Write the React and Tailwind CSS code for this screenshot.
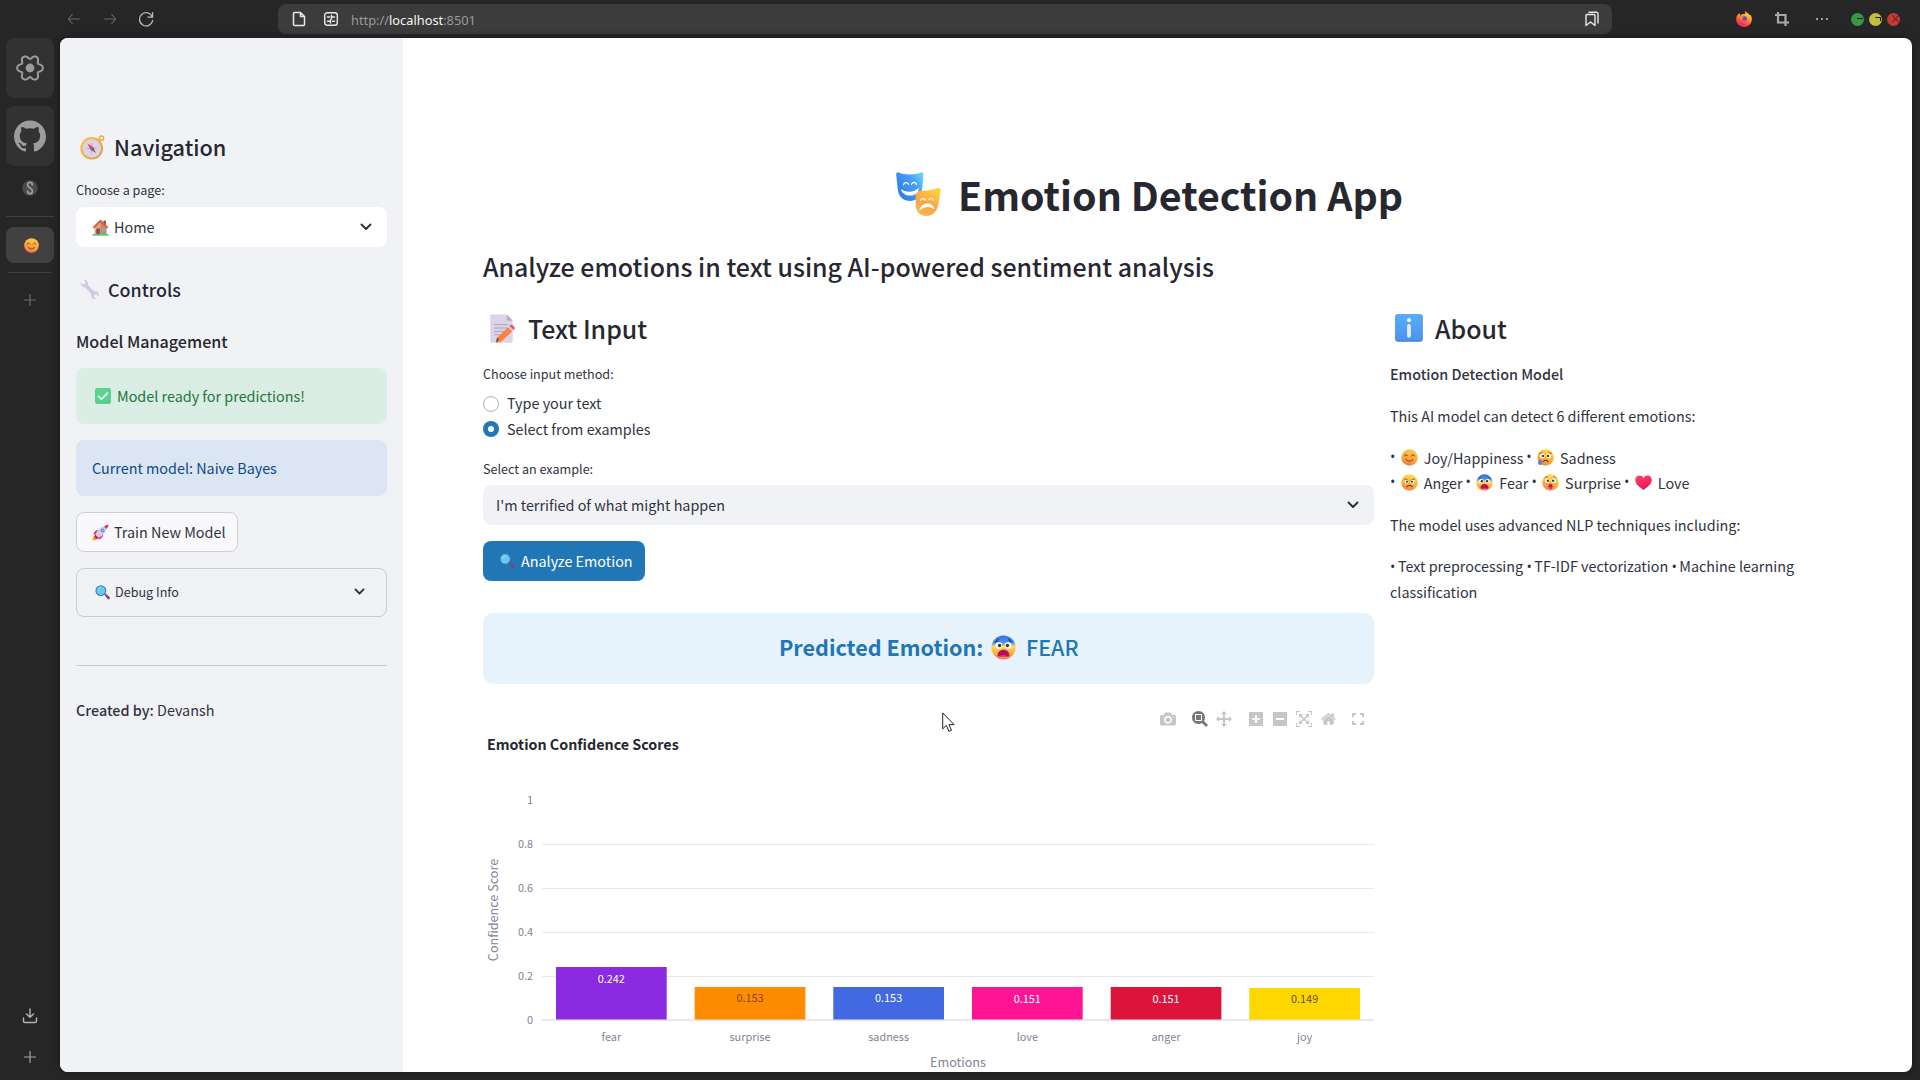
import React from "react";
import { SiGithub } from "react-icons/si";

/* ---------- Emoji drawings ---------- */

function Svg({ label, className, children }) {
  return (
    <svg role="img" aria-label={label} viewBox="0 0 32 32" className={"shrink-0 " + className}>
      {children}
    </svg>
  );
}

function Face({ id, label, className, top = "#ffd84a", mid = "#ffb52e", low = "#f5785a", children }) {
  return (
    <Svg label={label} className={className}>
      <defs>
        <linearGradient id={id} x1="0.65" y1="0" x2="0.35" y2="1">
          <stop offset="0" stopColor={top} />
          <stop offset="0.5" stopColor={mid} />
          <stop offset="1" stopColor={low} />
        </linearGradient>
      </defs>
      <circle cx="16" cy="16" r="15.5" fill={`url(#${id})`} />
      {children}
    </Svg>
  );
}

function Eyes({ y = 13 }) {
  return (
    <g>
      <circle cx="10" cy={y} r="4.3" fill="#fff" />
      <circle cx="22" cy={y} r="4.3" fill="#fff" />
      <circle cx="11" cy={y} r="2.2" fill="#4a2b33" />
      <circle cx="21" cy={y} r="2.2" fill="#4a2b33" />
    </g>
  );
}

function Smile({ className, id = "smile", low = "#f0803c" }) {
  return (
    <Face id={id} label="smile" className={className} top="#ffc850" mid="#ffac3c" low={low}>
      <g fill="none" stroke="#6b3528" strokeWidth="1.7" strokeLinecap="round">
        <path d="M6.5 13c.8-3 5-3 6 0M19.5 13c.8-3 5-3 6 0" />
        <path d="M9 19.5c3 4.6 11 4.600 14 0" />
      </g>
    </Face>
  );
}

function Sad({ className }) {
  return (
    <Face id="sad" label="sad" className={className} low="#f28a3e">
      <Eyes y={13} />
      <path d="M5 8.5c2-.2 3.7-1.2 4.8-3M27 8.5c-2-.2-3.7-1.2-4.8-3" stroke="#7a4428" strokeWidth="1.6" fill="none" strokeLinecap="round" />
      <path d="M12 23.500c2-3 6.500-3 8.500 0" stroke="#5a2b2b" strokeWidth="2" fill="none" strokeLinecap="round" />
      <path d="M6 19c2.300 3.200 3.800 5 3.800 7.400a3.900 3.900 0 0 1-7.800 0C2 24 3.900 22 6 19z" fill="#4f7fe8" />
    </Face>
  );
}

function Angry({ className }) {
  return (
    <Face id="angry" label="angry" className={className} top="#ffdf5a" low="#f2824a">
      <circle cx="10.5" cy="14.500" r="3.800" fill="#fff" />
      <circle cx="21.5" cy="14.500" r="3.800" fill="#fff" />
      <circle cx="11.2" cy="14.700" r="1.900" fill="#4a2b33" />
      <circle cx="20.8" cy="14.700" r="1.900" fill="#4a2b33" />
      <path d="M6.500 9.500c2.500 0 5 1 7 2.800M25.500 9.500c-2.500 0-5 1-7 2.800" stroke="#7a4428" strokeWidth="1.500" fill="none" strokeLinecap="round" />
      <path d="M11 24c2.500-3.200 7.500-3.200 10 0" stroke="#5a2b2b" strokeWidth="1.900" fill="none" strokeLinecap="round" />
    </Face>
  );
}

function Fear({ className, id = "fear" }) {
  return (
    <Svg label="fear" className={className}>
      <defs>
        <linearGradient id={id} x1="0.5" y1="0" x2="0.5" y2="1">
          <stop offset="0" stopColor="#2f6fe0" />
          <stop offset="0.28" stopColor="#4a90f0" />
          <stop offset="0.46" stopColor="#ffd560" />
          <stop offset="0.7" stopColor="#ffb43a" />
          <stop offset="1" stopColor="#f07a5a" />
        </linearGradient>
      </defs>
      <circle cx="16" cy="16" r="15.500" fill={`url(#${id})`} />
      <path d="M5 9c2-.4 3.400-1.600 4.300-3.400M27 9c-2-.4-3.400-1.600-4.300-3.400" stroke="#1f3f80" strokeWidth="1.500" fill="none" strokeLinecap="round" />
      <Eyes y={13.500} />
      <path d="M16 19c4.200 0 7.500 3.200 7.500 7 0 1-.7 1.600-1.600 1.600H10.100c-.9 0-1.600-.6-1.600-1.600 0-3.800 3.300-7 7.500-7z" fill="#b80f56" />
      <path d="M11 27.600c1-2.600 9-2.600 10 0z" fill="#ec2f7b" />
    </Svg>
  );
}

function Surprise({ className }) {
  return (
    <Face id="surprise" label="surprise" className={className} top="#ffdf5a" low="#f5806a">
      <Eyes y={12.500} />
      <path d="M5.500 7.500c1.200-1.800 3-2.500 5-2M26.500 7.500c-1.200-1.800-3-2.500-5-2" stroke="#8a5230" strokeWidth="1.500" fill="none" strokeLinecap="round" />
      <ellipse cx="16" cy="23.500" rx="3.900" ry="4.500" fill="#b3124e" />
      <ellipse cx="16" cy="25.800" rx="2.800" ry="2.200" fill="#f0387c" />
    </Face>
  );
}

function Heart({ className }) {
  return (
    <Svg label="love" className={className}>
      <defs>
        <linearGradient id="heart" x1="0.2" y1="0" x2="0.6" y2="1">
          <stop offset="0" stopColor="#f8436a" />
          <stop offset="0.55" stopColor="#f5265c" />
          <stop offset="1" stopColor="#d8127a" />
        </linearGradient>
      </defs>
      <path d="M16 30C6 23.500.5 18 .5 11 .5 6.300 4 3 8.500 3c3 0 5.900 1.600 7.500 4.400C17.600 4.600 20.500 3 23.500 3 28 3 31.500 6.300 31.500 11 31.500 18 26 23.500 16 30z" fill="url(#heart)" />
    </Svg>
  );
}

function Compass({ className }) {
  return (
    <Svg label="compass" className={className}>
      <defs>
        <linearGradient id="compass" x1="0" y1="0" x2="1" y2="1">
          <stop offset="0" stopColor="#ffc34d" />
          <stop offset="1" stopColor="#e09a2c" />
        </linearGradient>
      </defs>
      <circle cx="27.500" cy="4" r="2.800" fill="none" stroke="#f0ac36" strokeWidth="1.800" />
      <circle cx="15" cy="17" r="14.500" fill="url(#compass)" />
      <circle cx="15" cy="17" r="12" fill="#dcd3e2" />
      <path d="M15 9l1.200 6.800 6.800 1.200-6.800 1.200L15 25l-1.200-6.800L7 17l6.800-1.200z" fill="#b0a6bb" />
      <path d="M9.500 11l7 4.300-3 3.200z" fill="#ee2f78" />
      <path d="M20.500 23l-7-4.500 3-3.200z" fill="#6b6272" />
    </Svg>
  );
}

function House({ className }) {
  return (
    <Svg label="house" className={className}>
      <rect x="21.500" y="3" width="4.500" height="9" fill="#8f4a45" />
      <path d="M5 14L16 4l11 10v15H5z" fill="#dfa77c" />
      <path d="M16 4l11 10v15H16z" fill="#c98566" />
      <path d="M16 1L1 15.500l2.400 2.300L16 6l12.600 11.800 2.400-2.300z" fill="#dc5b3c" />
      <rect x="8" y="18" width="7" height="11" fill="#8a5148" />
      <rect x="18.500" y="17.500" width="6" height="6" fill="#6cb6e6" />
      <rect x="1" y="28" width="30" height="3.500" rx="1" fill="#4fd08a" />
    </Svg>
  );
}

function Wrench({ className }) {
  return (
    <Svg label="wrench" className={className}>
      <path
        d="M9.500 1.500c2.800 1.600 4 4.700 3.200 7.500l9.500 10.500c3-.6 6.200.8 7.600 3.700.8 1.700.8 3.500.2 5l-3.800-4-3.300.8-.9 3.200 3.600 4c-3 .6-6.300-1-7.500-4-.6-1.500-.6-3-.2-4.400L8.400 13C5.500 13.500 2.600 12 1.500 9.200 1 8 1 6.500 1.200 5.200l3.500 3.600 3.200-.9.900-3.200-2.800-3.200c1.200-.5 2.400-.5 3.500 0z"
        fill="#d3c7e3"
      />
    </Svg>
  );
}

function Check({ className }) {
  return (
    <Svg label="check" className={className}>
      <rect x="0.500" y="0.500" width="31" height="31" rx="3.500" fill="#3fbf78" />
      <rect x="0.500" y="0.500" width="29" height="29" rx="3.500" fill="#57d58e" />
      <path d="M7 16.500l6 6L25 10" fill="none" stroke="#fff" strokeWidth="3.200" strokeLinecap="round" strokeLinejoin="round" />
    </Svg>
  );
}

function Rocket({ className }) {
  return (
    <Svg label="rocket" className={className}>
      <path d="M1 31c0-5 1.500-8 5-9l5 5c-1.500 3-5 4-10 4z" fill="#f9a03c" />
      <path d="M3 18c2-5 6-7.500 11-7l-7 12zM14 29c5-2 7.500-6 7-11L9 25z" fill="#e0306f" />
      <path d="M6 21C9 12 16 4.500 27 3.500 28.500 15 20 23 11 26.500z" fill="#d9cbe8" />
      <path d="M22.500 4.600C25 3 28.500 1 31 1c0 2.500-1.800 6-3.300 8.500z" fill="#e02f58" />
      <circle cx="20" cy="12" r="3.600" fill="#4d8be0" />
      <circle cx="20" cy="12" r="2" fill="#8ab9f2" />
      <path d="M6 20l7 6.500-5 1.500-4-4z" fill="#c91f5c" />
    </Svg>
  );
}

function Magnifier({ className }) {
  return (
    <Svg label="search" className={className}>
      <path d="M20 20.500l2.500-2.500 8 7c1.600 1.500 1.600 3.400.4 4.600s-3.200 1.100-4.600-.4z" fill="#83407d" />
      <circle cx="12.500" cy="12" r="11.500" fill="#4675ad" />
      <circle cx="12.500" cy="12" r="9.300" fill="#62cbf0" />
      <path d="M7 11c0-3 2-5 5-5.200" fill="none" stroke="#9be4fa" strokeWidth="1.600" strokeLinecap="round" />
    </Svg>
  );
}

function Memo({ className }) {
  return (
    <svg role="img" aria-label="memo" viewBox="0 0 27 30" className={"shrink-0 " + className}>
      <path d="M1.500.5h16l6 6.500v21.500a1.300 1.300 0 0 1-1.300 1.300H1.500A1.300 1.300 0 0 1 .3 28.500V1.800A1.300 1.300 0 0 1 1.500.5z" fill="#dcd4e6" />
      <path d="M17.500.5l6 6.500h-4.700a1.300 1.300 0 0 1-1.300-1.300z" fill="#b5abc4" />
      <path d="M4.500 11h14M4.500 14.500h14M4.500 18h12M4.500 21.500h8" stroke="#a9a0b5" strokeWidth="1" />
      <path d="M6.300 29.700l1-5.200L18.800 13.600l4.300 4.400L11.600 28.800z" fill="#fb8240" />
      <path d="M6.300 29.700l1-5.200 2 1.600z" fill="#5a3f4a" />
      <path d="M18.800 13.600l1.300-1.300 4.400 4.300L23.100 18z" fill="#d8cfe2" />
      <path d="M20.100 12.300l1-1c1.700-1.200 5.800 2.200 4.400 4.300l-1 1z" fill="#f5555e" />
    </svg>
  );
}

function InfoBox({ className }) {
  return (
    <Svg label="info" className={className}>
      <defs>
        <linearGradient id="info" x1="0" y1="0" x2="0" y2="1">
          <stop offset="0" stopColor="#58adfb" />
          <stop offset="1" stopColor="#4c93ee" />
        </linearGradient>
      </defs>
      <rect x="0.300" y="0.300" width="31.400" height="31.400" rx="3" fill="#3d7fd6" />
      <rect x="0.300" y="0.300" width="30.400" height="30" rx="3" fill="url(#info)" />
      <circle cx="16" cy="7" r="2.300" fill="#f0f4ff" />
      <rect x="13.800" y="11.500" width="4.400" height="15.500" rx="2.200" fill="#e6ecff" />
    </Svg>
  );
}

function Masks({ className }) {
  return (
    <svg role="img" aria-label="masks" viewBox="0 0 45 44" className={"shrink-0 " + className}>
      <defs>
        <linearGradient id="maskBlue" x1="0" y1="0.700" x2="1" y2="0">
          <stop offset="0" stopColor="#2d7be6" />
          <stop offset="0.600" stopColor="#4a9ff5" />
          <stop offset="1" stopColor="#72e0fb" />
        </linearGradient>
        <linearGradient id="maskGold" x1="0.800" y1="0" x2="0.300" y2="1">
          <stop offset="0" stopColor="#ffd43f" />
          <stop offset="0.600" stopColor="#f9a548" />
          <stop offset="1" stopColor="#f9b84a" />
        </linearGradient>
      </defs>
      <path d="M2.500.3C7 3.200 20.500 3.200 24.800.3c1.700-.5 2.800.6 2.700 2.400l-1.300 13.800C25.200 24.500 20 29 14 29 8 29 3 25.500 1.900 18L.2 3C0 1 1 0 2.500.3z" fill="url(#maskBlue)" />
      <path d="M19.500 18.500c6 .9 15 .3 21.500-2.200 2.500-.8 3.900 0 3.700 2.200L42.500 32c-1.600 8-6 12-12 12s-10-3.500-10.800-10z" fill="url(#maskGold)" />
      <path d="M5 17c4.500 3.800 13.500 3.800 17.500-1.200.8 4.300-3.300 7.800-8.300 7.800-4.800 0-8.700-2.600-9.200-6.600z" fill="#fff" />
      <path d="M7.500 12.800c.6-2.800 4.300-2.800 5.100-.4M15.500 12.400c.8-2.700 4.400-2.700 5 .2" fill="none" stroke="#fff" strokeWidth="1.200" strokeLinecap="round" />
      <path d="M23.300 39c.6-4.500 4-7.500 8-7.500 3.700 0 6.500 2 7 6-3.500-3.700-10.600-3.700-15 1.500z" fill="#fff" />
      <path d="M24.500 28.500c.8-2.400 4-2.600 5-.3M33 27.700c1-2.200 4-2 4.500.8" fill="none" stroke="#fff" strokeWidth="1.200" strokeLinecap="round" />
    </svg>
  );
}

function Firefox({ className }) {
  return (
    <Svg label="Firefox" className={className}>
      <defs>
        <linearGradient id="fox" x1="0.800" y1="0" x2="0.300" y2="1">
          <stop offset="0" stopColor="#fff04a" />
          <stop offset="0.400" stopColor="#ff9a2b" />
          <stop offset="0.750" stopColor="#ff3f45" />
          <stop offset="1" stopColor="#e81f7a" />
        </linearGradient>
      </defs>
      <path d="M18.500 0c-1 3 .3 4.800 1.500 6-6-1-9 1-10.500 3C7.500 7.500 7.400 5.500 7.500 4 2.500 6.800 0 12 .3 17.500 1 26 8 32 16.200 32 24.500 32 31.700 25.500 31.700 16.500c0-3.700-1-7.300-3.600-9.700 0 1.200.2 2 .2 2.700C26.500 5 21 4 18.500 0z" fill="url(#fox)" />
      <circle cx="16.500" cy="16" r="5.500" fill="#7b3fd0" />
      <path d="M8 12c3 0 6 .5 8 2-2 1-3.500 1.500-4 3.500 2 2.500 6 3 8.500.5C19 23.500 9.500 23.500 8 12z" fill="#ff7a33" />
    </Svg>
  );
}

/* ---------- Line icons ---------- */

function Line({ className, vb = "0 0 16 16", width = 1.2, children }) {
  return (
    <svg viewBox={vb} className={"shrink-0 " + className} fill="none" stroke="currentColor" strokeWidth={width} strokeLinecap="round" strokeLinejoin="round">
      {children}
    </svg>
  );
}

function Chevron({ className }) {
  return (
    <Line className={className} vb="0 0 12 8" width={2}>
      <path d="M1.500 1.500L6 6l4.500-4.500" />
    </Line>
  );
}

const gearPath =
  Array.from({ length: 120 }, (_, i) => {
    const a = (i / 120) * Math.PI * 2;
    const r = 11.2 + 1.9 * Math.cos(6 * a) - 0.25 * Math.cos(12 * a);
    return `${i ? "L" : "M"}${(16 + r * Math.cos(a)).toFixed(2)} ${(16 + r * Math.sin(a)).toFixed(2)}`;
  }).join("") + "Z";

function Gear() {
  return (
    <svg viewBox="0 0 32 32" className="size-8">
      <path d={gearPath} fill="none" stroke="#9c9c9c" strokeWidth="2" strokeLinejoin="round" />
      <circle cx="16" cy="16" r="4.400" fill="#9c9c9c" />
    </svg>
  );
}

function Bar({ path, w = 1000, className }) {
  return (
    <svg viewBox={`0 0 ${w} 1000`} className={"h-4 shrink-0 " + className} fill="currentColor">
      <path transform="matrix(1 0 0 -1 0 850)" d={path} />
    </svg>
  );
}

const icons = {
  camera:
    "m500 450c-83 0-150-67-150-150 0-83 67-150 150-150 83 0 150 67 150 150 0 83-67 150-150 150z m400 150h-120c-16 0-34 13-39 29l-31 93c-6 15-23 28-40 28h-340c-16 0-34-13-39-28l-31-94c-6-15-23-28-40-28h-120c-55 0-100-45-100-100v-450c0-55 45-100 100-100h800c55 0 100 45 100 100v450c0 55-45 100-100 100z m-400-550c-138 0-250 112-250 250 0 138 112 250 250 250 138 0 250-112 250-250 0-138-112-250-250-250z m365 380c-19 0-35 16-35 35 0 19 16 35 35 35 19 0 35-16 35-35 0-19-16-35-35-35z",
  zoom: "m1000-25l-250 251c40 63 63 138 63 218 0 224-182 406-407 406-224 0-406-182-406-406s183-406 407-406c80 0 155 22 218 62l250-250 125 125z m-812 250l0 438 437 0 0-438-437 0z m62 375l313 0 0-312-313 0 0 312z",
  pan: "m1000 350l-187 188 0-125-250 0 0 250 125 0-188 187-187-187 125 0 0-250-250 0 0 125-188-188 186-187 0 125 252 0 0-250-125 0 187-188 188 188-125 0 0 250 250 0 0-126 187 188z",
  zoomIn: "m1 787l0-875 875 0 0 875-875 0z m687-500l-187 0 0-187-125 0 0 187-188 0 0 125 188 0 0 187 125 0 0-187 187 0 0-125z",
  zoomOut: "m0 788l0-876 876 0 0 876-876 0z m688-500l-500 0 0 125 500 0 0-125z",
  autoscale:
    "m250 850l-187 0-63 0 0-62 0-188 63 0 0 188 187 0 0 62z m688 0l-188 0 0-62 188 0 0-188 62 0 0 188 0 62-62 0z m-875-938l0 188-63 0 0-188 0-62 63 0 187 0 0 62-187 0z m875 188l0-188-188 0 0-62 188 0 62 0 0 62 0 188-62 0z m-125 188l-1 0-93-94-156 156 156 156 92-93 2 0 0 250-250 0 0-2 93-92-156-156-156 156 94 92 0 2-250 0 0-250 0 0 93 93 157-156-157-156-93 94 0 0 0-250 250 0 0 0-94 93 156 157 156-157-93-93 0 0 250 0 0 250z",
  home: "m786 296v-267q0-15-11-26t-25-10h-214v214h-143v-214h-214q-15 0-25 10t-11 26v267q0 1 0 2t0 2l321 264 321-264q1-1 1-4z m124 39l-34-41q-5-5-12-6h-2q-7 0-12 3l-386 322-386-322q-7-4-13-4-7 2-12 7l-35 41q-4 5-3 13t6 12l401 334q18 15 42 15t43-15l136-114v109q0 8 5 13t13 5h107q8 0 13-5t5-13v-227l122-102q5-5 6-12t-4-13z",
};

/* ---------- Browser chrome ---------- */

function TopBar() {
  return (
    <header className="flex h-[38px] shrink-0 items-center">
      <div className="flex w-[278px] items-center pl-[67px] text-[#666]">
        <Line className="size-[14px]"><path d="M14.500 8H1.500M6 3L1.500 8 6 13" /></Line>
        <Line className="ml-[22px] size-[14px]"><path d="M1.500 8h13M10 3l4.500 5-4.500 5" /></Line>
        <Line className="ml-[21px] size-4 text-[#b8b8b8]" width={1.3}>
          <path d="M14.300 6A6.600 6.600 0 1 0 14.600 9.500M14.600 1.600v4.600H10" />
        </Line>
      </div>
      <div className="flex h-[30px] w-[1334px] items-center rounded-lg bg-[#3c3c3c] pl-[13px] pr-[12px] text-[#e8e8e8]">
        <Line className="size-4" width={1.5}>
          <path d="M3.500 1.500h6l4 4v8a1 1 0 0 1-1 1h-9a1 1 0 0 1-1-1v-11a1 1 0 0 1 1-1zM9.500 1.500v4h4" />
        </Line>
        <Line className="ml-4 size-4" width={1.4}>
          <rect x="1.700" y="1.700" width="12.600" height="12.600" rx="2.500" />
          <path d="M4.500 6h2.200M9.500 6h2M8.500 4.300v3.400M4.500 10.200h2M7.500 8.600V12M9.500 10.200h2" />
        </Line>
        <span className="ml-[12px] mt-[2px] whitespace-pre font-['Noto_Sans'] text-[12.820px] leading-[18px] text-[#9a9a9a]">
          http://<span className="text-[#f4f4f4]">localhost</span>:8501
        </span>
        <Line className="ml-auto size-4" width={1.4}>
          <path d="M2 4.500a1 1 0 0 1 1-1h7a1 1 0 0 1 1 1v10l-4.500-3.500L2 14.500zM5 1.300h7.500a1.500 1.500 0 0 1 1.500 1.500V12" />
        </Line>
      </div>
      <div className="flex grow items-center pl-[124px]">
        <Firefox className="size-4" />
        <svg viewBox="0 0 14 14" className="ml-[23px] size-[14px] text-[#a8a8a8]" fill="none" stroke="currentColor" strokeWidth="2.200">
          <path d="M3 0v10.500h11M0 3h10.500v11" />
        </svg>
        <div className="ml-[27px] flex gap-[3px]">
          <i className="size-[2px] bg-[#a0a0a0]" />
          <i className="size-[2px] bg-[#a0a0a0]" />
          <i className="size-[2px] bg-[#a0a0a0]" />
        </div>
        <div className="ml-[23px] mt-px flex gap-[5px]">
          <svg viewBox="0 0 13 13" className="size-[13px]"><circle cx="6.500" cy="6.500" r="6.500" fill="#349a45" /><path d="M6 5.500h6" stroke="#111" /></svg>
          <svg viewBox="0 0 13 13" className="size-[13px]"><circle cx="6.500" cy="6.500" r="6.500" fill="#c4bd3d" /><path d="M6.500 4.500h5V8" stroke="#111" fill="none" /></svg>
          <svg viewBox="0 0 13 13" className="size-[13px]"><circle cx="6.500" cy="6.500" r="6.500" fill="#c23a37" /><path d="M5.500 2.500l6 6.500M11.500 2.500l-6 6.500" stroke="#5c1413" fill="none" /></svg>
        </div>
      </div>
    </header>
  );
}

function Rail() {
  return (
    <aside className="flex w-[60px] shrink-0 flex-col items-center">
      <div className="flex h-[60px] w-12 items-center justify-center rounded-lg bg-[#323232]"><Gear /></div>
      <div className="mt-2 flex h-[60px] w-12 items-center justify-center rounded-lg bg-[#323232]">
        <SiGithub className="size-8 text-[#9c9c9c]" />
      </div>
      <svg viewBox="0 0 16 16" className="mt-[14px] size-4">
        <circle cx="8" cy="8" r="7.700" fill="#4b4b4b" />
        <path d="M10.300 5.500V4.300c0-1.300-.9-2-2.300-2s-2.300.7-2.300 2v1.200c0 2.200 4.600 2.800 4.600 5v1.200c0 1.300-.9 2-2.300 2s-2.300-.7-2.300-2v-1.200" fill="none" stroke="#a0a0a0" strokeWidth="1.700" />
      </svg>
      <div className="mt-5 h-px w-12 bg-[#3f3f3f]" />
      <div className="mt-[10px] flex h-9 w-12 items-center justify-center rounded-lg bg-[#414141] pl-[3px]">
        <Smile className="size-[15px]" id="tabSmile" low="#f06a4a" />
      </div>
      <div className="mt-[9px] h-px w-11 bg-[#3f3f3f]" />
      <Line className="mt-[21px] size-3 text-[#6a6a6a]" vb="0 0 12 12"><path d="M6 .5v11M.5 6h11" /></Line>
      <Line className="mt-[702px] size-4 text-[#b5b5b5]" width={1.400}>
        <path d="M8 1v8M4.500 6L8 9.300 11.500 6M1.500 10v3a1.500 1.500 0 0 0 1.500 1.500h10a1.500 1.500 0 0 0 1.500-1.500v-3" />
      </Line>
      <Line className="mt-[27px] size-3 text-[#a5a5a5]" vb="0 0 12 12"><path d="M6 .5v11M.5 6h11" /></Line>
    </aside>
  );
}

/* ---------- App sidebar ---------- */

function Sidebar() {
  return (
    <nav className="flex w-[343px] shrink-0 flex-col bg-[#f0f2f6] px-4 pt-[94px]">
      <h2 className="flex h-[30px] items-center text-[21.700px] font-medium leading-[30px] text-[#262730]">
        <Compass className="ml-[4px] mr-[9px] size-[25px]" />
        <span>Navigation</span>
      </h2>
      <label className="mt-[18px] h-5 text-[12.600px] leading-5">Choose a page:</label>
      <div className="mt-[7px] flex h-10 items-center rounded-lg bg-white pl-4 pr-[15px]">
        <House className="size-[17px]" />
        <span className="ml-[5px]">Home</span>
        <Chevron className="ml-auto w-3" />
      </div>
      <h3 className="mt-[30px] flex h-6 items-center text-[17.900px] font-medium leading-6 text-[#262730]">
        <Wrench className="ml-[4px] mr-2 size-5" />
        <span>Controls</span>
      </h3>
      <h4 className="mt-7 h-6 text-[16.100px] font-medium leading-6 text-[#262730]">Model Management</h4>
      <div className="mt-[15px] flex h-14 items-center rounded-lg bg-[#daeee6] pl-[19px] text-[#1d773b]">
        <Check className="size-4" />
        <span className="ml-[6px]">Model ready for predictions!</span>
      </div>
      <div className="mt-4 flex h-14 items-center rounded-lg bg-[#dbe5f3] pl-4 text-[#0c4a85]">Current model: Naive Bayes</div>
      <button className="mt-4 flex h-10 w-[162px] items-center rounded-lg border border-[#cfd0d4] bg-[#f9f9fb] pl-[15px]">
        <Rocket className="size-[17px]" />
        <span className="ml-[5px]">Train New Model</span>
      </button>
      <div className="mt-4 flex h-[49px] items-center rounded-lg border border-[#c9cbd0] pl-[18px] pr-[21px] text-[12.600px]">
        <Magnifier className="size-[15px]" />
        <span className="-mt-px ml-[5px]">Debug Info</span>
        <Chevron className="-mt-[2px] ml-auto w-[11px]" />
      </div>
      <hr className="mt-12 border-t border-[#c9cbd0]" />
      <p className="mt-[34px] h-5 leading-5"><b className="font-medium">Created by:</b> Devansh</p>
    </nav>
  );
}

/* ---------- Chart ---------- */

const bars = [
  { name: "fear", x: 73, top: 213, value: "0.242", fill: "#8a2be2", text: "#fff", ty: 229 },
  { name: "surprise", x: 211.7, top: 233, value: "0.153", fill: "#ff8c00", text: "#7a4a10", ty: 248 },
  { name: "sadness", x: 350.3, top: 233, value: "0.153", fill: "#4169e1", text: "#fff", ty: 248 },
  { name: "love", x: 489, top: 233, value: "0.151", fill: "#ff1493", text: "#fff", ty: 249 },
  { name: "anger", x: 627.7, top: 233, value: "0.151", fill: "#dc143c", text: "#fff", ty: 249 },
  { name: "joy", x: 766.3, top: 234, value: "0.149", fill: "#ffd700", text: "#5c5010", ty: 249 },
];

const ticks = [
  ["1", 46], ["0.8", 90], ["0.6", 134], ["0.4", 178], ["0.2", 222], ["0", 266],
];

function Chart() {
  return (
    <svg width="891" height="318" viewBox="0 0 891 318" className="block" fill="#808495">
      {ticks.slice(1, 5).map(([t, y]) => <rect key={t} x="59" y={y} width="832" height="1" fill="#e6e8ee" />)}
      <rect x="59" y="265" width="832" height="2" fill="#e6e8ee" />
      {ticks.map(([t, y]) => <text key={t} x="50" y={y + 3.700} textAnchor="end" fontSize="10.900">{t}</text>)}
      {bars.map((b) => (
        <g key={b.name} fontSize="10.900" textAnchor="middle">
          <rect x={b.x} y={b.top} width="110.700" height={265.500 - b.top} fill={b.fill} />
          <text x={b.x + 55.300} y={b.ty} fill={b.text}>{b.value}</text>
          <text x={b.x + 55.300} y="287">{b.name}</text>
        </g>
      ))}
      <text x="475" y="313" textAnchor="middle" fontSize="12.600">Emotions</text>
      <text transform="translate(15 156) rotate(-90)" textAnchor="middle" fontSize="12.600">Confidence Score</text>
    </svg>
  );
}

/* ---------- Main area ---------- */

function Radio({ checked, children }) {
  return (
    <div className="flex h-6 items-center gap-2">
      {checked ? (
        <span className="flex size-4 items-center justify-center rounded-full bg-[#2176b5]"><i className="size-[6px] rounded-full bg-white" /></span>
      ) : (
        <span className="size-4 rounded-full border border-[#b0b1b8] bg-white" />
      )}
      <span className={checked ? "" : "-mt-[2px]"}>{children}</span>
    </div>
  );
}

const Dot = () => <span className="font-['Open_Sans'] leading-none tracking-[-0.7px]">•</span>;

function LeftColumn() {
  return (
    <section className="relative flex w-[891px] shrink-0 flex-col">
      <h2 className="flex h-[34px] items-center text-[24.900px] font-medium leading-[34px] text-[#262730]">
        <Memo className="ml-[7px] mr-[12px] h-[29px] w-[26px]" />
        <span>Text Input</span>
      </h2>
      <label className="mt-[19px] h-5 text-[12.600px] leading-5">Choose input method:</label>
      <div className="mt-2 flex flex-col gap-px">
        <Radio>Type your text</Radio>
        <Radio checked>Select from examples</Radio>
      </div>
      <label className="mt-[18px] h-5 text-[12.600px] leading-5">Select an example:</label>
      <div className="mt-[6px] flex h-10 items-center justify-between rounded-lg bg-[#f0f2f6] pl-[13px] pr-[15px]">
        <span>I'm terrified of what might happen</span>
        <Chevron className="w-3" />
      </div>
      <button className="mt-4 flex h-10 w-[162px] items-center rounded-lg bg-[#2176b5] pl-4 text-white">
        <Magnifier className="size-4" />
        <span className="ml-[6px]">Analyze Emotion</span>
      </button>
      <div className="mt-8 flex h-[71px] items-center rounded-[10px] bg-[#e6f3fd] pb-[2px] pl-[296px] text-[21.550px] text-[#2176b5]">
        <b className="w-[204px] whitespace-nowrap font-bold">Predicted Emotion:</b>
        <Fear className="ml-2 size-[25px]" id="fearBig" />
        <span className="ml-[10px] font-medium">FEAR</span>
      </div>
      <div className="mt-[27px] flex h-4 items-center pl-[677px] text-[#c6c6c6]">
        <Bar path={icons.camera} className="w-4" />
        <Bar path={icons.zoom} className="ml-4 w-4 text-[#777]" />
        <Bar path={icons.pan} className="ml-2 w-4" />
        <Bar path={icons.zoomIn} w={875} className="ml-[17px] w-[14px]" />
        <Bar path={icons.zoomOut} w={875} className="ml-[10px] w-[14px]" />
        <Bar path={icons.autoscale} className="ml-[9px] w-4" />
        <Bar path={icons.home} w={928} className="ml-[9px] w-[15px]" />
        <svg viewBox="0 0 12 12" className="ml-4 size-3" fill="none" stroke="currentColor" strokeWidth="2">
          <path d="M1 4V1h3M8 1h3v3M11 8v3H8M4 11H1V8" />
        </svg>
      </div>
      <h5 className="mt-[7px] h-5 pl-1 text-[14.300px] font-bold leading-5 text-[#262730]">Emotion Confidence Scores</h5>
      <Chart />
      <svg viewBox="0 0 13 20" className="absolute left-[459px] top-[401px] h-5 w-[13px]">
        <path d="M.7.900v16l3.700-3.500 2.500 6 2.600-1.100-2.500-5.700h5.100z" fill="#fff" stroke="#222" strokeWidth="1" />
      </svg>
    </section>
  );
}

function RightColumn() {
  return (
    <section className="ml-4 w-[442px]">
      <h2 className="flex h-[34px] items-center text-[24.900px] font-medium leading-[34px] text-[#262730]">
        <InfoBox className="ml-[5px] mr-[12px] size-7" />
        <span>About</span>
      </h2>
      <div className="mt-4 flex flex-col gap-[16.600px] leading-[25.200px]">
        <p className="font-medium">Emotion Detection Model</p>
        <p>This AI model can detect 6 different emotions:</p>
        <div>
          <div className="flex h-[25.200px] items-center">
            <Dot /><Smile className="ml-[6px] mr-[6px] size-[17px]" />Joy/Happiness<span className="ml-[3px] flex"><Dot /></span>
            <Sad className="ml-[6px] mr-[6px] size-[17px]" />Sadness
          </div>
          <div className="flex h-[25.200px] items-center">
            <Dot /><Angry className="ml-[6px] mr-[6px] size-[17px]" />Anger<span className="ml-[3px] flex"><Dot /></span>
            <Fear className="ml-[6px] mr-[6px] size-[17px]" />Fear<span className="ml-[3px] flex"><Dot /></span>
            <Surprise className="ml-[6px] mr-[6px] size-[17px]" />Surprise<span className="ml-[3px] flex"><Dot /></span>
            <Heart className="ml-[6px] mr-[6px] size-[17px]" />Love
          </div>
        </div>
        <p>The model uses advanced NLP techniques including:</p>
        <p><Dot /> Text preprocessing <Dot /> TF-IDF vectorization <Dot /> Machine learning classification</p>
      </div>
    </section>
  );
}

export default function App() {
  return (
    <div className="flex h-[1080px] w-[1920px] flex-col overflow-hidden bg-[#262626]">
      <TopBar />
      <div className="flex h-[1042px]">
        <Rail />
        <div className="flex h-[1034px] w-[1852px] overflow-hidden rounded-[8px] bg-white font-['Noto_Sans_CJK_SC',sans-serif] text-[14.370px] text-[#31333f] shadow-[0_0_8px_rgba(0,0,0,0.35)]">
          <Sidebar />
          <main className="flex grow flex-col pl-20 pt-[130px]">
            <h1 className="ml-[413px] flex h-[52px] items-center whitespace-nowrap text-[39.300px] font-bold leading-[52px] text-[#262730]">
              <Masks className="mr-[17px] h-11 w-[45px]" />
              <span>Emotion Detection App</span>
            </h1>
            <p className="mt-[29px] h-[34px] whitespace-nowrap text-[24.920px] font-medium leading-[34px] text-[#262730]">
              Analyze emotions in text using AI-powered sentiment analysis
            </p>
            <div className="mt-7 flex">
              <LeftColumn />
              <RightColumn />
            </div>
          </main>
        </div>
      </div>
    </div>
  );
}
